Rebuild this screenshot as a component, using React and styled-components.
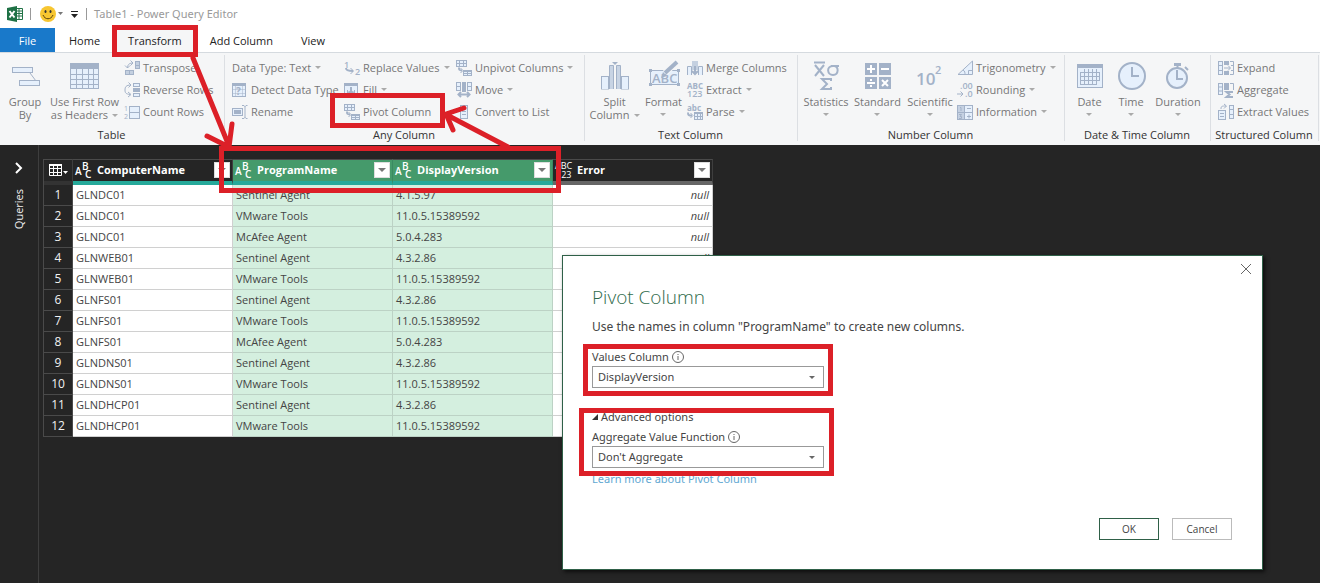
import React from 'react';
import styled, { createGlobalStyle, css } from 'styled-components';

const GlobalStyle = createGlobalStyle`
  *, *::before, *::after { box-sizing: border-box; }
  html, body, #root { min-height: 100vh; }
  body {
    margin: 0;
    background: #252525;
    font-family: "Open Sans", "Noto Sans", sans-serif;
    font-size: 11px;
    line-height: 14px;
    color: #444;
  }
  button, select { font: inherit; color: inherit; }
  svg { overflow: visible; }
`;

const ink = '#a3b2c8';
const pale = '#e6f0fc';
const red = '#dc2028';

const Page = styled.div`
  position: relative;
  display: flex;
  flex-direction: column;
  min-height: 100vh;
  overflow: hidden;
`;

const TitleBar = styled.header`
  display: flex;
  align-items: center;
  height: 28px;
  padding-left: 7px;
  background: #fff;
  color: #999;
`;

const TitleIcon = styled.svg`
  flex: none;
  display: block;
  margin-right: ${(p) => p.$gap || 0}px;
`;

const TitleRule = styled.span`
  width: 1px;
  height: 12px;
  background: #999;
  margin-right: ${(p) => p.$gap}px;
`;

const TitleText = styled.h1`
  margin: 0;
  font-family: "Noto Sans", "Open Sans", sans-serif;
  font-size: 11px;
  font-weight: 400;
`;

const TabBar = styled.nav`
  display: flex;
  height: 24px;
  background: #fff;
`;

const Tab = styled.button`
  border: 0;
  padding: 2px 14px 0;
  background: ${(p) => (p.$active ? '#f5f6f7' : 'transparent')};
  color: #222;
  white-space: nowrap;
  ${(p) => p.$file && css`
    width: 55px;
    background: #1979ca;
    color: #fff;
  `}
`;

const Ribbon = styled.div`
  display: flex;
  height: 93px;
  background: #f5f6f7;
  border-top: 1px solid #d5dadf;
`;

const Group = styled.section`
  position: relative;
  display: flex;
  flex-direction: column;
  flex: 0 0 ${(p) => p.$width}px;
  padding: 4px 0 0 ${(p) => p.$pad}px;

  &::after {
    content: "";
    position: absolute;
    right: 0;
    top: 2px;
    bottom: 4px;
    width: 1px;
    background: #dcdfe3;
  }
`;

const GroupBody = styled.div`
  display: flex;
  height: 66px;
`;

const GroupLabel = styled.h2`
  margin: 5px 2px 0 -${(p) => p.$pad}px;
  text-align: center;
  font-size: 11px;
  line-height: 14px;
  font-weight: 400;
  color: #333;
  white-space: nowrap;
`;

const BigButton = styled.button`
  display: flex;
  flex-direction: column;
  align-items: center;
  width: ${(p) => p.$width}px;
  padding: 4px 0 0;
  border: 0;
  background: none;
  color: #777;
  line-height: 13px;
  white-space: nowrap;

  svg { flex: none; margin-bottom: 4px; }
`;

const BigText = styled.span`
  display: flex;
  flex-direction: column;
  align-items: center;
`;

const SmallColumn = styled.div`
  display: flex;
  flex-direction: column;
  width: ${(p) => p.$width}px;
`;

const SmallButton = styled.button`
  display: flex;
  align-items: center;
  height: 22px;
  padding: 0;
  border: 0;
  background: none;
  color: #777;
  white-space: nowrap;

  svg { flex: none; margin-right: 3px; }
`;

const CaretShape = styled.span`
  display: inline-block;
  flex: none;
  margin: ${(p) => (p.$below ? '5px 0 0' : '0 0 1px 4px')};
  border: solid transparent;
  border-width: 3px 3px 0;
  border-top-color: #aaa;
  vertical-align: middle;
`;

const Workspace = styled.main`
  position: relative;
  display: flex;
  flex: 1;
  background: #252525;
`;

const QueriesRail = styled.aside`
  display: flex;
  flex-direction: column;
  align-items: center;
  gap: 15px;
  width: 39px;
  padding-top: 17px;
  border-right: 1px solid #3e3e3e;
  color: #f2f2f2;
`;

const RailButton = styled.button`
  display: block;
  padding: 0;
  border: 0;
  background: none;

  svg { display: block; }
`;

const RailLabel = styled.span`
  writing-mode: vertical-rl;
  transform: rotate(180deg);
  line-height: 16px;
`;

const Grid = styled.table`
  align-self: flex-start;
  width: 670px;
  margin: 14px 0 0 4px;
  border-collapse: separate;
  border-spacing: 0;
  table-layout: fixed;
  border-left: 1px solid #4a4a4a;
`;

const HeadCell = styled.th`
  width: ${(p) => p.$width}px;
  height: 26px;
  padding: 0;
  border-top: 1px solid #4a4a4a;
  border-right: 1px solid ${(p) => (p.$selected ? '#3a8a62' : '#3e3e3e')};
  border-bottom: 4px solid ${(p) => p.$bar || '#333'};
  background: ${(p) => (p.$selected ? '#459a6b' : '#252525')};
  color: #fff;
  text-align: left;
  font-weight: 700;
`;

const HeadContent = styled.div`
  display: flex;
  align-items: center;
  height: 21px;
  padding: 0 2px 1px;
  gap: 5px;

  svg { flex: none; }
`;

const HeadName = styled.span`
  flex: 1;
`;

const FilterButton = styled.button`
  display: flex;
  align-items: center;
  justify-content: center;
  width: 16px;
  height: 16px;
  padding: 0;
  border: 1px solid #ddd;
  background: #fff;
`;

const FilterCaret = styled.span`
  border: solid transparent;
  border-width: 4px 4px 0;
  border-top-color: #777;
`;

const RowNumber = styled.th`
  height: 21px;
  padding: 0;
  border-right: 1px solid #4a4a4a;
  border-bottom: 1px solid #4a4a4a;
  background: #252525;
  color: #f2f2f2;
  font-size: 12px;
  font-weight: 400;
  text-align: center;
`;

const Cell = styled.td`
  height: 21px;
  padding: 0 3px;
  border-right: 1px solid ${(p) => (p.$selected ? '#bcd2c5' : '#d0d0d0')};
  border-bottom: 1px solid ${(p) => (p.$selected ? '#bcd2c5' : '#d0d0d0')};
  background: ${(p) => (p.$selected ? '#d4efdf' : '#fff')};
  text-align: ${(p) => (p.$empty ? 'right' : 'left')};
  font-style: ${(p) => (p.$empty ? 'italic' : 'normal')};
`;

const Dialog = styled.form`
  position: absolute;
  top: 110px;
  right: 57px;
  display: flex;
  flex-direction: column;
  align-items: flex-start;
  width: 701px;
  height: 315px;
  padding: 29px 30px 29px 29px;
  border: 1px solid #2f6048;
  background: #fff;
  box-shadow: 2px 2px 4px #000a;
  font-family: "Noto Sans", "Open Sans", sans-serif;
`;

const CloseButton = styled.button`
  position: absolute;
  top: 7px;
  right: 10px;
  padding: 0;
  border: 0;
  background: none;

  svg { display: block; }
`;

const DialogTitle = styled.h2`
  margin: 0 0 10px;
  font-family: "Open Sans", sans-serif;
  font-size: 19px;
  line-height: 24px;
  font-weight: 300;
  color: #2f6b4c;
`;

const Lead = styled.p`
  margin: 0 0 13px;
  font-size: 12px;
  line-height: 16px;
`;

const FieldLabel = styled.label`
  display: flex;
  align-items: center;
  gap: 3px;
  height: 18px;
`;

const SelectBox = styled.div`
  display: grid;
  align-items: center;
  width: 232px;
  height: 22px;
  border: 1px solid #999;

  > * { grid-area: 1 / 1; }
`;

const Select = styled.select`
  width: 100%;
  height: 20px;
  padding: 0 5px;
  border: 0;
  background: transparent;
  appearance: none;
`;

const SelectCaret = styled.span`
  justify-self: end;
  margin-right: 8px;
  border: solid transparent;
  border-width: 3px 3px 0;
  border-top-color: #666;
  pointer-events: none;
`;

const Disclosure = styled.button`
  display: flex;
  align-items: center;
  gap: 3px;
  height: 18px;
  margin: 20px 0 2px;
  padding: 0;
  border: 0;
  background: none;
`;

const HelpLink = styled.a`
  margin-top: 4px;
  color: #62a8d2;
  text-decoration: none;
`;

const Actions = styled.div`
  display: flex;
  align-self: flex-end;
  gap: 13px;
  margin-top: auto;
`;

const ActionButton = styled.button`
  width: 60px;
  height: 22px;
  padding: 0;
  border: 1px solid ${(p) => (p.$primary ? '#2f6048' : '#bbb')};
  background: #fff;
  font-family: "Open Sans", sans-serif;
  font-size: 10px;
`;

const Markup = styled.svg`
  position: absolute;
  left: 0;
  top: 0;
  pointer-events: none;
`;

/* ---- icons ---- */

const Svg = ({ w = 16, h = w, children }) => (
  <svg width={w} height={h} viewBox={`0 0 ${w} ${h}`} fill="none" stroke={ink} aria-hidden="true">
    {children}
  </svg>
);

const Caret = (props) => <CaretShape aria-hidden="true" {...props} />;

const Box = ({ x, y, w, h, f = pale }) => <rect x={x + 0.5} y={y + 0.5} width={w - 1} height={h - 1} fill={f} />;

const glyph = { fill: ink, stroke: 'none', fontFamily: 'Open Sans, sans-serif' };

const icons = {
  group: (
    <Svg w={30}>
      <path d="M20 12l6 8" />
      <Box x={2} y={6} w={21} h={6} /><Box x={9} y={19} w={21} h={6} />
    </Svg>
  ),
  headers: (
    <Svg w={30}>
      <Box x={0} y={2} w={29} h={26} />
      <path fill={ink} stroke="none" d="M0 2h29v6H0z" />
      <path d="M0 13.500h29M0 18.500h29M0 23.500h29M6.500 8v20M12.500 8v20M18.500 8v20M23.500 8v20" />
    </Svg>
  ),
  transpose: (
    <Svg>
      <Box x={11} y={1} w={5} h={8} f="#c4d0e0" /><Box x={1} y={10} w={9} h={5} f="#c4d0e0" />
      <path d="M11 5.500h5M5.500 10v5M3.500 8C3.500 4 6 3 9 3M6.500 .5L9 3 6.500 5.500M1 5.500L3.500 8 6 5.500" />
    </Svg>
  ),
  reverse: (
    <Svg>
      <Box x={9} y={1} w={7} h={4} /><Box x={9} y={6} w={7} h={4} f={ink} /><Box x={9} y={11} w={7} h={4} />
      <path d="M7 3C2 3 1 5 1 8s1 4 5 4.500M4.500 .5L7 3 4.500 5.500M4 10l3 2.500L4 15" />
    </Svg>
  ),
  count: (
    <Svg>
      <text x="0" y="7" fontSize="7" {...glyph}>1</text><text x="0" y="15" fontSize="7" {...glyph}>2</text>
      <Box x={5} y={2} w={11} h={13} /><path d="M5 8.500h11" />
    </Svg>
  ),
  detect: (
    <Svg>
      <Box x={0} y={1} w={14} h={14} /><path strokeWidth="3" d="M0 2.500h14" />
      <path opacity=".5" d="M0 7.500h14M0 11.500h14M3.500 4v11M10.500 4v11" />
      <text x="4" y="13" fontSize="10" fontWeight="700" {...glyph}>?</text>
    </Svg>
  ),
  rename: (
    <Svg>
      <Box x={0} y={4} w={11} h={8} /><path fill={ink} stroke="none" d="M2 6h7v4H2z" />
      <path d="M10 1.500h2l1 1 1-1h1.500M13 2v12M10 14.500h2l1-1 1 1h1.500" />
    </Svg>
  ),
  replace: (
    <Svg>
      <text x="0" y="8" fontSize="9" fontWeight="600" {...glyph}>1</text>
      <text x="11" y="15" fontSize="9" fontWeight="600" {...glyph}>2</text>
      <path strokeWidth="2" d="M2 8c0 2 1 3 7 3" /><path d="M6.500 8L9.500 11l-3 3" />
    </Svg>
  ),
  fill: (
    <Svg>
      <Box x={0} y={1} w={14} h={14} /><path strokeWidth="3" d="M0 2.500h14" />
      <path d="M3.500 8v5M10.500 8v5" /><path strokeWidth="2" d="M7 5v7M4.500 9.500L7 12l2.500-2.500" />
    </Svg>
  ),
  pivot: (
    <Svg>
      <Box x={0} y={0} w={11} h={7} /><path d="M0 3.500h11M3.500 0v7M7.500 0v7" />
      <path strokeWidth="2" d="M3 7.500c0 2 0 3 3 3" /><path d="M4.500 8L7 10.500 4.500 13" />
      <Box x={7} y={10} w={9} h={6} /><path strokeWidth="2" d="M7 11h9" /><path d="M7 13.500h9M11.500 11v5" />
    </Svg>
  ),
  move: (
    <Svg>
      <Box x={0} y={0} w={5} h={9} /><Box x={11} y={0} w={5} h={9} />
      <path fill={ink} stroke="none" d="M6 0h4v10H6z" />
      <path d="M0 4.500h5M11 4.500h5" />
      <path strokeWidth="2" d="M3 12.500h10" /><path strokeWidth="2" d="M5 10l-2.500 2.500L5 15M11 10l2.500 2.500L11 15" />
    </Svg>
  ),
  list: (
    <Svg>
      <Box x={4} y={1} w={8} h={14} /><path d="M6 4.500h4M6 7.500h4M6 10.500h4" />
    </Svg>
  ),
  split: (
    <Svg w={30}>
      <Box x={1} y={15} w={8} h={14} /><Box x={21} y={15} w={8} h={14} />
      <path stroke="#f5f6f7" d="M1 29h28" />
      <path fill="#c8d4e4" d="M9.500 28V4.500h4V28M16.500 28V4.500h4V28" />
      <path fill={ink} stroke="none" d="M12 1h6l-3 3z" />
    </Svg>
  ),
  format: (
    <Svg w={32} h={30}>
      <Box x={2} y={9} w={29} h={15} />
      <path fill={ink} stroke="none" d="M1 8h3v3H1zM29 8h3v3h-3zM1 22h3v3H1zM29 22h3v3h-3z" />
      <text x="4" y="22" fontSize="13" fontWeight="600" {...glyph}>ABC</text>
      <path stroke="#f5f6f7" strokeWidth="6" d="M17 12L29 1" />
      <path strokeWidth="4" d="M17 12L29 1" /><path fill={ink} stroke="none" d="M13 17l2-6 4 4z" />
    </Svg>
  ),
  merge: (
    <Svg>
      <path d="M.5 15V6.500h4V15M11.500 15V6.500h4V15" fill={pale} />
      <path stroke="none" fill="#c4d0e0" d="M5 1h6v9H5z" /><path strokeWidth="2" d="M8 6v8M5 11l3 3 3-3" />
    </Svg>
  ),
  extract: (
    <Svg>
      <text x="0" y="7" fontSize="8" fontWeight="700" {...glyph}>ABC</text>
      <text x="0" y="15" fontSize="9" fontWeight="600" {...glyph}>123</text>
    </Svg>
  ),
  parse: (
    <Svg>
      <text x="0" y="7" fontSize="8" fontWeight="700" {...glyph}>abc</text>
      <path strokeWidth="2" d="M1 8.500c0 3 1 3 4 3" /><path d="M3.500 9L6 11.500 3.500 14" />
      <Box x={7} y={8} w={9} h={8} /><path strokeWidth="2" d="M7 9h9" /><path d="M7 12.500h9M10.500 8v8M13.500 8v8" />
    </Svg>
  ),
  statistics: (
    <Svg w={30}>
      <path d="M3 1.500h11" strokeWidth="2" />
      <path strokeWidth="2" d="M4 4l9 11M13 4L4 15" />
      <path strokeWidth="2" d="M20 5h8M22 5c-7 0-6 9 0 9s6-9 1-9" />
      <path strokeWidth="2" d="M20 20v-2h-9l5 5-5 5h9v-2" />
    </Svg>
  ),
  standard: (
    <Svg w={30}>
      <path fill={ink} stroke="none" d="M2 2h12v12H2zM16 2h12v12H16zM2 16h12v12H2zM16 16h12v12H16z" />
      <path stroke="#fff" strokeWidth="2" d="M4 8h8M8 4v8M18 8h8M4 22h8M8 18v2M8 24v2M19 19l6 6M25 19l-6 6" />
    </Svg>
  ),
  scientific: (
    <Svg w={30}>
      <text x="1" y="24" fontSize="17" fontWeight="600" {...glyph}>10</text>
      <text x="20" y="13" fontSize="11" fontWeight="600" {...glyph}>2</text>
    </Svg>
  ),
  trig: (
    <Svg>
      <path fill={pale} d="M1 14.500L15.500 1v13.500zM11.500 14v-3.500h4M6 10c2 1 2 3 2 4.500" />
    </Svg>
  ),
  rounding: (
    <Svg>
      <text x="3" y="7" fontSize="9" fontWeight="600" {...glyph}>.00</text>
      <text x="8" y="15" fontSize="9" fontWeight="600" {...glyph}>.0</text>
      <path d="M0 12h6M3.500 9.500L6 12l-2.500 2.500" />
    </Svg>
  ),
  information: (
    <Svg>
      <Box x={0} y={1} w={16} h={15} /><path fill={ink} opacity=".5" stroke="none" d="M0 1h7v15H0z" />
      <path d="M7.500 1v14M0 8.500h16M10 4.500h4M10 12.500h4M12 10.500v4M3 3.500h1V7M2 10.500h2.500L3 12.500h1.500v2H2" />
    </Svg>
  ),
  date: (
    <Svg w={30}>
      <Box x={2} y={3} w={26} h={24} /><path fill={ink} stroke="none" d="M2 3h26v4H2z" />
      <path d="M5 11.500h20M5 15.500h20M5 19.500h20M5 23.500h16M5.500 11v13M9.500 8v16M13.500 8v16M17.500 8v16M21.500 8v16M24.500 11v9" />
    </Svg>
  ),
  time: (
    <Svg w={30}>
      <circle cx="16" cy="15" r="13" fill={pale} strokeWidth="2" /><path strokeWidth="2" d="M16 6v9h7" />
    </Svg>
  ),
  duration: (
    <Svg w={30}>
      <path strokeWidth="3" d="M11 3.500h7" /><path strokeWidth="2" d="M14.500 3v4M22 6l3 3" />
      <circle cx="14" cy="17" r="10" fill={pale} strokeWidth="2" /><path strokeWidth="2" d="M14 9v9h6" />
    </Svg>
  ),
  expand: (
    <Svg>
      <Box x={0} y={1} w={5} h={14} /><path d="M0 5.500h5M0 10.500h5" />
      <path fill={ink} stroke="none" d="M6 1h5v4H6zM6 11h5v4H6z" />
      <path d="M6 8h6M10 5.500L12.500 8 10 10.500M12 1.500h3.500v13H12M13 5.500h3M13 10.500h3" />
    </Svg>
  ),
  aggregate: (
    <Svg>
      <Box x={0} y={1} w={5} h={12} /><path d="M0 5h5M0 9h5" />
      <path fill={ink} stroke="none" d="M6 1h5v7H6z" />
      <path d="M12 1.500h3.500V8" /><path strokeWidth="2" d="M15 10H8.500l3 2.500-3 2.500H15" />
    </Svg>
  ),
  values: (
    <Svg>
      <Box x={0} y={6} w={8} h={10} /><path d="M2 9.500h4M2 12.500h4M3 5c0-3 1-3 5-3M6 0l2.500 2L6 4.500" />
      <Box x={11} y={1} w={5} h={14} /><path d="M11 5.500h5M11 10.500h5" />
    </Svg>
  ),
};

const TextTypeIcon = () => (
  <svg width="17" height="18" viewBox="0 0 17 18" fill="#fff" fontSize="10" fontWeight="600" aria-hidden="true">
    <text x="0" y="14">A</text><text x="7" y="9">B</text><text x="10" y="17">C</text>
  </svg>
);

const AnyTypeIcon = () => (
  <svg width="17" height="18" viewBox="0 0 17 18" fill="#fff" fontSize="9" fontWeight="400" aria-hidden="true">
    <text x="0" y="8">ABC</text><text x="1" y="17">123</text>
  </svg>
);

const InfoIcon = () => (
  <svg width="12" height="12" viewBox="0 0 12 12" fill="none" stroke="#666" aria-hidden="true">
    <circle cx="6" cy="6" r="5.500" /><path d="M6 5v4M6 3v1" />
  </svg>
);

/* ---- ribbon data ---- */

const groups = [
  {
    name: 'Table', width: 225, pad: 5,
    big: [
      { icon: 'group', lines: ['Group', 'By'], width: 40 },
      { icon: 'headers', lines: ['Use First Row', 'as Headers'], width: 79, menu: true },
    ],
    columns: [{ width: 95, items: [['transpose', 'Transpose'], ['reverse', 'Reverse Rows'], ['count', 'Count Rows']] }],
  },
  {
    name: 'Any Column', width: 360, pad: 7, big: [],
    columns: [
      { width: 112, items: [[null, 'Data Type: Text', true], ['detect', 'Detect Data Type'], ['rename', 'Rename']] },
      { width: 112, items: [['replace', 'Replace Values', true], ['fill', 'Fill', true], ['pivot', 'Pivot Column']] },
      { width: 125, items: [['pivot', 'Unpivot Columns', true], ['move', 'Move', true], ['list', 'Convert to List']] },
    ],
  },
  {
    name: 'Text Column', width: 213, pad: 4,
    big: [
      { icon: 'split', lines: ['Split', 'Column'], width: 51, menu: true },
      { icon: 'format', lines: ['Format'], width: 47, menu: true },
    ],
    columns: [{ width: 108, items: [['merge', 'Merge Columns'], ['extract', 'Extract', true], ['parse', 'Parse', true]] }],
  },
  {
    name: 'Number Column', width: 267, pad: 2,
    big: [
      { icon: 'statistics', lines: ['Statistics'], width: 52, menu: true },
      { icon: 'standard', lines: ['Standard'], width: 51, menu: true },
      { icon: 'scientific', lines: ['Scientific'], width: 54, menu: true },
    ],
    columns: [{ width: 104, items: [['trig', 'Trigonometry', true], ['rounding', 'Rounding', true], ['information', 'Information', true]] }],
  },
  {
    name: 'Date & Time Column', width: 146, pad: 4,
    big: [
      { icon: 'date', lines: ['Date'], width: 41, menu: true },
      { icon: 'time', lines: ['Time'], width: 42, menu: true },
      { icon: 'duration', lines: ['Duration'], width: 52, menu: true },
    ],
    columns: [],
  },
  {
    name: 'Structured Column', width: 108, pad: 7, big: [],
    columns: [{ width: 98, items: [['expand', 'Expand'], ['aggregate', 'Aggregate'], ['values', 'Extract Values']] }],
  },
];

const tabs = ['File', 'Home', 'Transform', 'Add Column', 'View'];

const columns = [
  { name: 'ComputerName', type: 'text', bar: '#26a99a' },
  { name: 'ProgramName', type: 'text', bar: '#26a99a', selected: true },
  { name: 'DisplayVersion', type: 'text', bar: '#26a99a', selected: true },
  { name: 'Error', type: 'any', bar: '#666' },
];

const rows = [
  ['GLNDC01', 'Sentinel Agent', '4.1.5.97'],
  ['GLNDC01', 'VMware Tools', '11.0.5.15389592'],
  ['GLNDC01', 'McAfee Agent', '5.0.4.283'],
  ['GLNWEB01', 'Sentinel Agent', '4.3.2.86'],
  ['GLNWEB01', 'VMware Tools', '11.0.5.15389592'],
  ['GLNFS01', 'Sentinel Agent', '4.3.2.86'],
  ['GLNFS01', 'VMware Tools', '11.0.5.15389592'],
  ['GLNFS01', 'McAfee Agent', '5.0.4.283'],
  ['GLNDNS01', 'Sentinel Agent', '4.3.2.86'],
  ['GLNDNS01', 'VMware Tools', '11.0.5.15389592'],
  ['GLNDHCP01', 'Sentinel Agent', '4.3.2.86'],
  ['GLNDHCP01', 'VMware Tools', '11.0.5.15389592'],
];

function LargeCommand({ icon, lines, width, menu }) {
  const inline = menu && lines.length > 1;
  return (
    <BigButton type="button" $width={width}>
      {icons[icon]}
      <BigText>
        {lines.map((line, i) => (
          <span key={line}>{line}{inline && i === lines.length - 1 && <Caret />}</span>
        ))}
        {menu && !inline && <Caret $below />}
      </BigText>
    </BigButton>
  );
}

function RibbonGroup({ group }) {
  return (
    <Group $width={group.width} $pad={group.pad}>
      <GroupBody>
        {group.big.map((b) => <LargeCommand key={b.icon} {...b} />)}
        {group.columns.map((col) => (
          <SmallColumn key={col.items[0][1]} $width={col.width}>
            {col.items.map(([icon, text, menu]) => (
              <SmallButton type="button" key={text}>
                {icon && icons[icon]}{text}{menu && <Caret />}
              </SmallButton>
            ))}
          </SmallColumn>
        ))}
      </GroupBody>
      <GroupLabel $pad={group.pad}>{group.name}</GroupLabel>
    </Group>
  );
}

function DataGrid() {
  return (
    <Grid>
      <thead>
        <tr>
          <HeadCell $width={29} aria-label="Table menu">
            <HeadContent>
              <svg width="22" height="14" viewBox="0 0 22 14" fill="none" stroke="#fff" aria-hidden="true">
                <path d="M3.500 1.500h12v11h-12zM3 5.500h13M3 9.500h13M7.500 2v11M11.500 2v11" /><path strokeWidth="2" d="M3 2h13" />
                <path fill="#fff" stroke="none" d="M17 8h5l-2.500 3z" />
              </svg>
            </HeadContent>
          </HeadCell>
          {columns.map((c) => (
            <HeadCell key={c.name} $width={160} $selected={c.selected} $bar={c.bar}>
              <HeadContent>
                {c.type === 'text' ? <TextTypeIcon /> : <AnyTypeIcon />}
                <HeadName>{c.name}</HeadName>
                <FilterButton type="button" aria-label={`Filter ${c.name}`}><FilterCaret /></FilterButton>
              </HeadContent>
            </HeadCell>
          ))}
        </tr>
      </thead>
      <tbody>
        {rows.map((r, i) => (
          <tr key={i}>
            <RowNumber scope="row">{i + 1}</RowNumber>
            <Cell>{r[0]}</Cell>
            <Cell $selected>{r[1]}</Cell>
            <Cell $selected>{r[2]}</Cell>
            <Cell $empty>null</Cell>
          </tr>
        ))}
      </tbody>
    </Grid>
  );
}

function Field({ id, label, value }) {
  return (
    <>
      <FieldLabel htmlFor={id}>{label}<InfoIcon /></FieldLabel>
      <SelectBox>
        <Select id={id} defaultValue={value}><option>{value}</option></Select>
        <SelectCaret />
      </SelectBox>
    </>
  );
}

function PivotDialog() {
  return (
    <Dialog role="dialog" aria-labelledby="pivot-title" onSubmit={(e) => e.preventDefault()}>
      <CloseButton type="button" aria-label="Close">
        <svg width="12" height="12" viewBox="0 0 12 12" stroke="#666" aria-hidden="true"><path d="M1 1l10 10M11 1L1 11" /></svg>
      </CloseButton>
      <DialogTitle id="pivot-title">Pivot Column</DialogTitle>
      <Lead>Use the names in column "ProgramName" to create new columns.</Lead>
      <Field id="values-column" label="Values Column" value="DisplayVersion" />
      <Disclosure type="button" aria-expanded="true">
        <svg width="6" height="6" viewBox="0 0 6 6" fill="#333" aria-hidden="true"><path d="M6 0v6H0z" /></svg>
        Advanced options
      </Disclosure>
      <Field id="aggregate-function" label="Aggregate Value Function" value="Don't Aggregate" />
      <HelpLink href="#pivot-help">Learn more about Pivot Column</HelpLink>
      <Actions>
        <ActionButton type="submit" $primary>OK</ActionButton>
        <ActionButton type="button">Cancel</ActionButton>
      </Actions>
    </Dialog>
  );
}

function Annotations() {
  return (
    <Markup width="1320" height="583" viewBox="0 0 1320 583" fill="none" stroke={red} strokeWidth="5" aria-hidden="true">
      <rect x="114.500" y="27.500" width="81" height="27" />
      <rect x="332.500" y="95.500" width="110" height="30" />
      <rect x="221.500" y="148.500" width="337" height="42" />
      <rect x="585.500" y="346.500" width="245" height="47" />
      <rect x="581.500" y="410.500" width="250" height="63" />
      <g strokeLinecap="round" strokeLinejoin="round">
        <path d="M193 58L229 146M207 136L229 147L232 124" />
        <path d="M508 147L447 115M464 108L446 114L453 130" />
      </g>
    </Markup>
  );
}

export default function App() {
  return (
    <Page>
      <GlobalStyle />
      <TitleBar>
        <TitleIcon $gap={7} width="16" height="16" viewBox="0 0 16 16" aria-hidden="true">
          <path fill="#fff" stroke="#217346" d="M8 2.500h7.500v11H8z" />
          <path stroke="#217346" d="M9 5h6M9 7.500h6M9 10h6M12 3v10" />
          <path fill="#1e7145" d="M0 2l10-2v16L0 14z" />
          <path stroke="#fff" strokeWidth="2" d="M2.500 5l5 6.500M7.500 5l-5 6.500" />
        </TitleIcon>
        <TitleRule $gap={9} />
        <TitleIcon $gap={2} width="16" height="16" viewBox="0 0 16 16" fill="none" aria-hidden="true">
          <circle cx="8" cy="8" r="8" fill="#f7c631" />
          <ellipse cx="5.500" cy="5.500" rx="1" ry="1.500" fill="#333" /><ellipse cx="10.500" cy="5.500" rx="1" ry="1.500" fill="#333" />
          <path stroke="#5a430d" d="M3 9c2 5 8 5 10 0" />
        </TitleIcon>
        <TitleIcon $gap={8} width="5" height="4" viewBox="0 0 5 4" aria-hidden="true"><path fill="#777" d="M0 0h5L2.500 3z" /></TitleIcon>
        <TitleIcon $gap={8} width="7" height="7" viewBox="0 0 7 7" aria-hidden="true"><path fill="#222" d="M0 0h7v1H0zM0 3h7L3.500 7z" /></TitleIcon>
        <TitleRule $gap={7} />
        <TitleText>Table1 - Power Query Editor</TitleText>
      </TitleBar>
      <TabBar>
        {tabs.map((t) => (
          <Tab key={t} type="button" $file={t === 'File'} $active={t === 'Transform'}>{t}</Tab>
        ))}
      </TabBar>
      <Ribbon>
        {groups.map((g) => <RibbonGroup key={g.name} group={g} />)}
      </Ribbon>
      <Workspace>
        <QueriesRail>
          <RailButton type="button" aria-label="Expand queries">
            <svg width="8" height="12" viewBox="0 0 8 12" fill="none" stroke="#fff" strokeWidth="2" aria-hidden="true"><path d="M1 1l5 5-5 5" /></svg>
          </RailButton>
          <RailLabel>Queries</RailLabel>
        </QueriesRail>
        <DataGrid />
        <PivotDialog />
      </Workspace>
      <Annotations />
    </Page>
  );
}
